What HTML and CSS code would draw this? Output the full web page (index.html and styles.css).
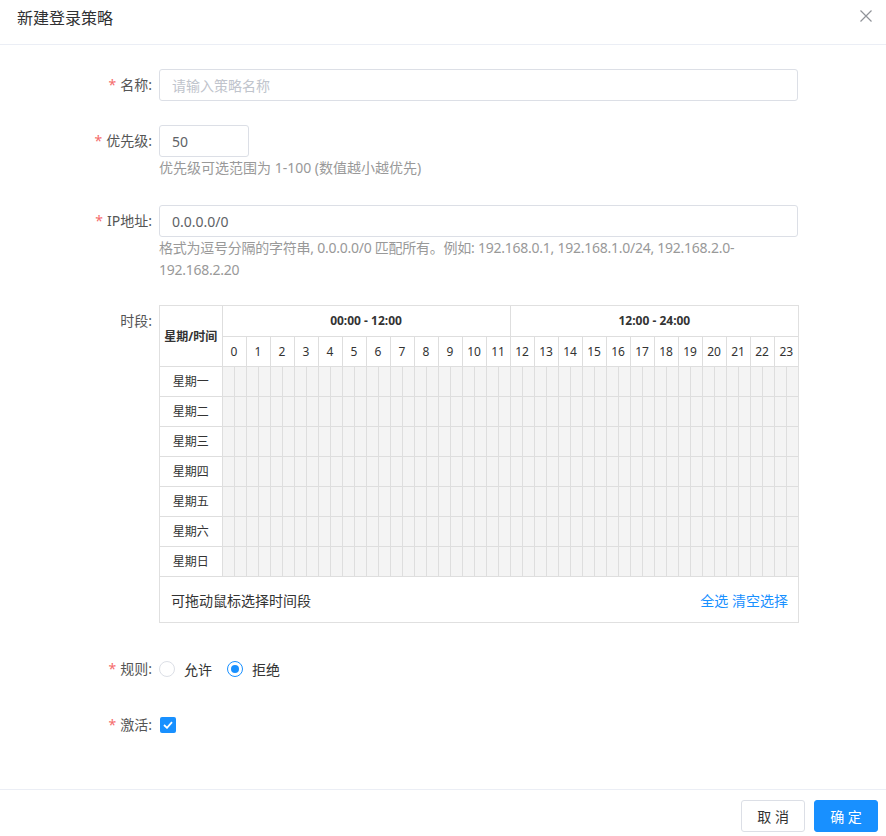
FILE: index.html
```html
<!DOCTYPE html>
<html lang="zh-CN">
<head>
<meta charset="utf-8">
<title>新建登录策略</title>
<link rel="stylesheet" href="styles.css">
</head>
<body>
<div class="dialog">
  <div class="dialog-header">
    <span class="dialog-title">新建登录策略</span>
    <svg class="close" width="12" height="12" viewBox="0 0 12 12"><path d="M0.5 0.5 L11.5 11.5 M11.5 0.5 L0.5 11.5" stroke="#909399" stroke-width="1.2" fill="none"/></svg>
  </div>
  <div class="dialog-body">
    <div class="form-item">
      <label class="form-label"><span class="req">*</span>名称:</label>
      <div class="form-content">
        <input class="input input-full" placeholder="请输入策略名称">
      </div>
    </div>
    <div class="form-item item-priority">
      <label class="form-label"><span class="req">*</span>优先级:</label>
      <div class="form-content">
        <input class="input input-small" value="50">
        <div class="help">优先级可选范围为 1-100 (数值越小越优先)</div>
      </div>
    </div>
    <div class="form-item">
      <label class="form-label"><span class="req">*</span>IP地址:</label>
      <div class="form-content">
        <input class="input input-full" value="0.0.0.0/0">
        <div class="help help-ip">格式为逗号分隔的字符串, 0.0.0.0/0 匹配所有。例如: 192.168.0.1, 192.168.1.0/24, 192.168.2.0-192.168.2.20</div>
      </div>
    </div>
    <div class="form-item item-time">
      <label class="form-label">时段:</label>
      <div class="form-content">
        <div class="schedule">
          <table class="sched-table" id="sched"></table>
          <div class="sched-foot">
            <span>可拖动鼠标选择时间段</span>
            <span class="links"><a>全选</a> <a>清空选择</a></span>
          </div>
        </div>
      </div>
    </div>
    <div class="form-item">
      <label class="form-label"><span class="req">*</span>规则:</label>
      <div class="form-content radios">
        <span class="radio"><span class="radio-circle"></span><span class="radio-text">允许</span></span>
        <span class="radio"><span class="radio-circle checked"></span><span class="radio-text">拒绝</span></span>
      </div>
    </div>
    <div class="form-item">
      <label class="form-label"><span class="req">*</span>激活:</label>
      <div class="form-content radios">
        <span class="checkbox"><svg width="10" height="8" viewBox="0 0 10 8"><path d="M1 4 L4 6.8 L9 1.2" stroke="#fff" stroke-width="1.8" fill="none"/></svg></span>
      </div>
    </div>
  </div>
  <div class="dialog-footer">
    <button class="btn">取 消</button>
    <button class="btn btn-primary">确 定</button>
  </div>
</div>
<script>
(function(){
  var t = document.getElementById('sched');
  var days = ['星期一','星期二','星期三','星期四','星期五','星期六','星期日'];
  var h = '<colgroup><col class="col-first">';
  for (var i=0;i<48;i++) h += '<col class="col-half">';
  h += '</colgroup><thead><tr><th rowspan="2" class="th-first">星期/时间</th><th colspan="24" class="th-range">00:00 - 12:00</th><th colspan="24" class="th-range">12:00 - 24:00</th></tr><tr>';
  for (var i=0;i<24;i++) h += '<th colspan="2" class="th-hour">'+i+'</th>';
  h += '</tr></thead><tbody>';
  for (var d=0; d<7; d++){
    h += '<tr><td class="day">'+days[d]+'</td>';
    for (var j=0;j<48;j++) h += '<td class="cell"></td>';
    h += '</tr>';
  }
  h += '</tbody>';
  t.innerHTML = h;
})();
</script>
</body>
</html>
```

FILE: styles.css
```css
* { box-sizing: border-box; }
html, body { margin: 0; padding: 0; background: #fff; }
body {
  font-family: "Noto Sans", "Noto Sans CJK SC", sans-serif;
  font-size: 14px;
  color: #606266;
}
.dialog {
  width: 886px;
  height: 836px;
  display: flex;
  flex-direction: column;
  background: #fff;
}
.dialog-header {
  height: 45px;
  border-bottom: 1px solid #ebeef5;
  display: flex;
  align-items: flex-start;
  justify-content: space-between;
  padding: 6px 14px 0 17px;
}
.dialog-title {
  font-size: 16px;
  line-height: 24px;
  color: #303133;
}
.close { margin-top: 4px; }
.dialog-body {
  flex: 1;
  padding-top: 24px;
}
.form-item {
  display: flex;
  margin-bottom: 24px;
}
.form-item.item-priority { margin-bottom: 26px; }
.form-item.item-time { margin-bottom: 30px; }
.form-label {
  width: 152px;
  margin-right: 7px;
  text-align: right;
  line-height: 32px;
  color: #555;
  flex: none;
}
.req { color: #f56c6c; margin-right: 4px; }
.form-content { width: 640px; }
.input {
  display: block;
  height: 32px;
  border: 1px solid #dcdfe6;
  border-radius: 3px;
  padding: 0 12px;
  font-family: inherit;
  font-size: 14px;
  color: #606266;
  outline: none;
  background: #fff;
}
.input::placeholder { color: #c0c4cc; }
.input-full { width: 639px; }
.input-small { width: 90px; }
.help {
  color: #999;
  font-size: 14px;
  line-height: 22px;
}
.help-ip { letter-spacing: -0.25px; }
.schedule {
  width: 640px;
  border: 1px solid #e0e0e0;
}
.sched-table {
  border-collapse: collapse;
  table-layout: fixed;
  width: 638px;
  font-size: 12px;
  color: #333;
}
.col-first { width: 62px; }
.col-half { width: 12px; }
.sched-table th, .sched-table td {
  border: 1px solid #dedede;
  padding: 0;
  text-align: center;
}
.sched-table tr:first-child th { border-top: none; }
.sched-table tr > :first-child { border-left: none; }
.sched-table tr > :last-child { border-right: none; }
.th-first { font-weight: bold; height: 60px; }
.th-range { font-weight: bold; height: 30px; }
.th-hour { font-weight: normal; height: 30px; }
.day { height: 30px; background: #fff; }
.cell { background: #f4f4f4; }
.sched-table tbody tr:last-child td { border-bottom: none; }
.sched-foot {
  border-top: 1px solid #dedede;
  height: 46px;
  display: flex;
  align-items: center;
  justify-content: space-between;
  padding: 0 10px 0 11px;
  color: #333;
  font-size: 14px;
}
.links a { color: #1890ff; cursor: pointer; }
.radios {
  display: flex;
  align-items: center;
  height: 32px;
}
.radio {
  display: inline-flex;
  align-items: center;
  margin-right: 15px;
  color: #333;
}
.radio-circle {
  width: 16px;
  height: 16px;
  border: 1px solid #dcdfe6;
  border-radius: 50%;
  position: relative;
  margin-right: 9px;
  background: #fff;
}
.radio-circle.checked { border-color: #1890ff; }
.radio-circle.checked::after {
  content: "";
  position: absolute;
  left: 3px; top: 3px;
  width: 8px; height: 8px;
  border-radius: 50%;
  background: #1890ff;
}
.checkbox {
  width: 16px;
  height: 16px;
  border-radius: 2px;
  background: #1890ff;
  display: inline-flex;
  align-items: center;
  justify-content: center;
  margin-left: 1px;
}
.dialog-footer {
  border-top: 1px solid #ebeef5;
  height: 47px;
  display: flex;
  justify-content: flex-end;
  align-items: flex-start;
  padding: 10px 8px 0 0;
  gap: 9px;
}
.btn {
  height: 32px;
  padding: 0 15px;
  min-width: 63px;
  border: 1px solid #dcdfe6;
  border-radius: 3px;
  background: #fff;
  color: #333;
  font-family: inherit;
  font-size: 14px;
}
.btn-primary {
  background: #1890ff;
  border-color: #1890ff;
  color: #fff;
  min-width: 64px;
}
```
